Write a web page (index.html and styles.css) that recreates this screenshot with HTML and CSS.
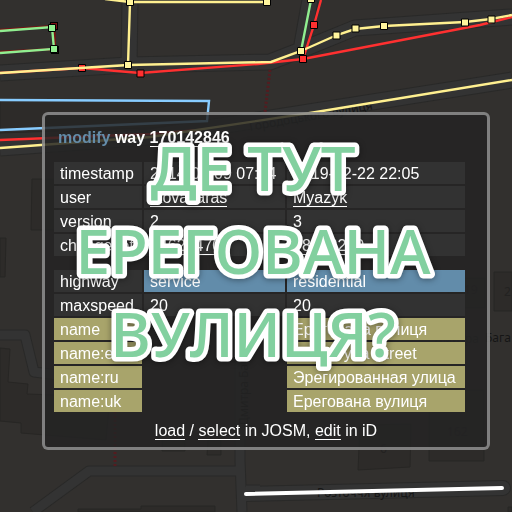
FILE: index.html
```html
<!DOCTYPE html>
<html lang="uk">
<head>
<meta charset="utf-8">
<title>way 170142846</title>
<link rel="stylesheet" href="styles.css">
</head>
<body>
<svg class="map" viewBox="0 0 512 512" preserveAspectRatio="xMidYMid slice" aria-hidden="true">
  <rect width="512" height="512" fill="#32302e"/>
  <!-- buildings -->
  <g fill="#2d2b29" stroke="#272624">
    <path d="M32 179H58V230H31ZM0 238H6L5 277H0ZM0 348L10 349L8 382L28 384L27 394L110 397L106 440L21 433V423L0 421Z"/>
    <path d="M0 100L208 103L206 126L0 133ZM494 272H512V311H494ZM429 390H484V461H429ZM360 425L411 424L410 467L358 470ZM141 506H215V512H78V509H141ZM208 440H221V455H207ZM162 440H185V451H162ZM448 278H485V308H448ZM508 507H512V512H508Z"/>
  </g>
  <!-- streets -->
  <g fill="none" stroke-linejoin="round">
    <g stroke="#292928" stroke-width="17">
      <path d="M0 73L128 65L270 62L301 50L355 28L512 17M129 65L130 0M301 50L310 0M0 148L150 137L512 80"/>
      <path d="M245 494L503 488" stroke-width="16" stroke-linecap="round"/>
      <path d="M240 330V460L242 512M33 512L89 471H240M246 490H260M0 335H25L34 372L90 379" stroke-width="11"/>
    </g>
    <g stroke="#333333" stroke-width="15">
      <path d="M0 73L128 65L270 62L301 50L355 28L512 17M129 65L130 0M301 50L310 0M0 148L150 137L512 80"/>
      <path d="M245 494L503 488" stroke-width="14" stroke-linecap="round"/>
      <path d="M240 330V460L242 512M33 512L89 471H240M246 490H260M0 335H25L34 372L90 379" stroke-width="9"/>
    </g>
  </g>
  <path d="M270 70L265 112M115 400V466" fill="none" stroke="#541c20" stroke-width="3" stroke-dasharray="2 2"/>
  <!-- street names -->
  <g class="street">
    <text x="485" y="342">Бага</text>
    <text x="317" y="497">Розточчя вулиця</text>
    <text x="250" y="131" transform="rotate(-10 250 131)">Городоцького вулиця</text>
    <text x="248" y="426" transform="rotate(-90 248 426)">Дмитра Багалія</text>
    <text class="faint" x="434" y="343">Дмитра</text>
    <text class="faint" x="447" y="436">162</text>
    <text class="faint" x="380" y="453">6</text>
    <text class="faint" x="464" y="294">19</text>
    <text class="faint" x="504" y="296">2</text>
  </g>
  <!-- ways before and after the change -->
  <g fill="none" stroke-width="2.4">
    <g stroke="#7b1113"><path d="M0 30L54 26L55 49L0 52"/></g>
    <g stroke="#ff3030"><path d="M0 73L82 68L140 73L258 64L303 59L480 25L512 17M303 59L314 25L321 0M0 140L150 134L200 130"/></g>
    <g stroke="#90ee90"><path d="M0 31L52 27L54 49L0 53M301 51L311 0"/></g>
    <g stroke="#88ccff"><path d="M0 100L209 101L207 121L0 130"/></g>
    <path d="M78.500 64.500h7v7h-7z" fill="#ff3030" stroke="#000" stroke-width="1"/>
    <g stroke="#fff090"><path d="M105 -1L130 2H267M130 2L128 65L0 73M128 65L271 62L301 51L337 35L355 29L384 26L465 22L491 19L512 15M0 148L150 137L310 113L512 80"/></g>
    <path d="M246 494L502 488" stroke="#fff" stroke-width="4" stroke-linecap="round"/>
  </g>
  <g stroke="#000">
    <g fill="#7b1113"><rect x="50.500" y="22.500" width="7" height="7"/><rect x="51.500" y="46.500" width="7" height="7"/></g>
    <g fill="#ff3030"><path d="M137 70h7v7h-7zM299.500 55.500h7v7h-7zM310.500 21.500h7v7h-7z"/></g>
    <g fill="#90ee90"><path d="M48.500 24.500h7v7h-7zM50.500 45.500h7v7h-7z"/></g>
    <g fill="#fff59d"><path d="M126.500 -1.500h7v7h-7zM124.500 61.500h7v7h-7zM263.500 -1.500h7v7h-7zM307.500 -4.500h7v7h-7zM297.500 47.500h7v7h-7zM333 32h7v7h-7zM352 25h7v7h-7zM380.500 22.500h7v7h-7zM461.500 19h7v7h-7zM488 16h7v7h-7z"/></g>
  </g>
</svg>

<main class="page">
  <section class="panel">
    <h2 class="title"><span class="action">modify</span> way <a href="#way">170142846</a></h2>
    <table class="info">
      <colgroup><col class="key"><col class="before"><col class="after"></colgroup>
      <tbody>
        <tr><th scope="row">timestamp</th><td>2014-07-09 07:24</td><td>2019-02-22 22:05</td></tr>
        <tr><th scope="row">user</th><td><a href="#old-user">tkovaltaras</a></td><td><a href="#new-user">Myazyk</a></td></tr>
        <tr><th scope="row">version</th><td>2</td><td>3</td></tr>
        <tr><th scope="row">changeset</th><td><a href="#old-set">24620470</a></td><td><a href="#new-set">78102210</a></td></tr>
      </tbody>
    </table>
    <table class="info">
      <colgroup><col class="key"><col class="before"><col class="after"></colgroup>
      <tbody>
        <tr><th scope="row">highway</th><td class="changed">service</td><td class="changed">residential</td></tr>
        <tr><th scope="row">maxspeed</th><td>20</td><td>20</td></tr>
        <tr class="added"><th scope="row">name</th><td class="none"></td><td>Ерегована вулиця</td></tr>
        <tr class="added"><th scope="row">name:en</th><td class="none"></td><td>Erehovyna Street</td></tr>
        <tr class="added"><th scope="row">name:ru</th><td class="none"></td><td>Эрегированная улица</td></tr>
        <tr class="added"><th scope="row">name:uk</th><td class="none"></td><td>Ерегована вулиця</td></tr>
      </tbody>
    </table>
    <p class="actions"><a href="#load">load</a> / <a href="#select">select</a> in JOSM, <a href="#edit">edit</a> in iD</p>
  </section>
  <svg class="caption" viewBox="0 0 512 512" preserveAspectRatio="xMidYMid slice">
    <text x="253" y="191">ДЕ ТУТ</text>
    <text x="253" y="274">ЕРЕГОВАНА</text>
    <text x="253" y="357">ВУЛИЦЯ?</text>
  </svg>
</main>
</body>
</html>
```
FILE: styles.css
```css
* {
  box-sizing: border-box;
}

body {
  margin: 0;
  min-height: 100vh;
  overflow: hidden;
  background: #32302e;
  color: #fff;
  font: 16px/22px "Liberation Sans", Arial, sans-serif;
}

.map,
.caption {
  position: fixed;
  inset: 0;
  width: 100%;
  height: 100%;
}

.street {
  fill: #161616;
  font: 12px "Noto Sans", sans-serif;
}

.street .faint {
  fill: #232221;
}

.page {
  position: relative;
  padding: 112px 22px 0 42px;
}

.panel {
  padding: 12px 10px 5px;
  border: 3px solid rgba(255, 255, 255, 0.42);
  border-radius: 6px;
  background: rgba(36, 36, 36, 0.84);
}

.title {
  margin: 0 3px 11px;
  font-size: 16px;
  line-height: 22px;
}

.action {
  color: #648ca9;
}

a {
  color: inherit;
  text-decoration: none;
  border-bottom: 1px solid #fff;
}

.info {
  width: 415px;
  margin: 0 0 10px -3px;
  table-layout: fixed;
  border-spacing: 2px;
}

.info + .info {
  margin-bottom: 6px;
}

.key {
  width: 88px;
}

.before {
  width: 141px;
}

.after {
  width: 178px;
}

th,
td {
  height: 22px;
  padding: 2px 0 0 6px;
  background: #323232;
  font-weight: normal;
  line-height: 20px;
  text-align: left;
  white-space: nowrap;
}

.changed {
  background: #628caa;
}

.added th,
.added td {
  background: #a8a46b;
}

.added .none {
  background: none;
}

.actions {
  margin: 0;
  line-height: 22px;
  text-align: center;
}

.caption {
  pointer-events: none;
  fill: #82d09f;
  stroke: #fff;
  stroke-width: 9px;
  stroke-linejoin: round;
  paint-order: stroke fill;
  font: 500 62px "Noto Sans", sans-serif;
  font-kerning: none;
  text-anchor: middle;
  filter: drop-shadow(0 1px 3px rgba(0, 0, 0, 0.4));
}
```
